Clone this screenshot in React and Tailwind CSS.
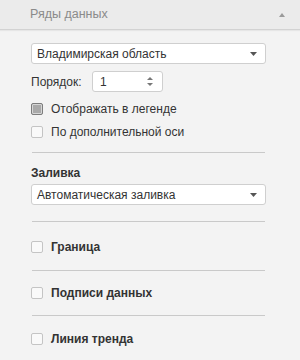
import React from "react";

function Caret() {
  return (
    <svg width="7" height="4" viewBox="0 0 7 4" className="block">
      <path d="M0 0 H7 L3.5 4 Z" fill="#555" />
    </svg>
  );
}

function Select({ text }) {
  return (
    <div className="h-[21px] bg-white border border-[#cfcfcf] rounded-[3px] flex items-center pl-[5px] pr-[8px] text-[#333]">
      <span className="flex-1 leading-none">{text}</span>
      <Caret />
    </div>
  );
}

function Box({ checked }) {
  if (checked) {
    return (
      <div className="w-[12px] h-[12px] rounded-[2px] border border-[#7d7d7d] bg-[#a9a9a9] shadow-[inset_0_0_0_1px_#d6d6d6] shrink-0" />
    );
  }
  return (
    <div className="w-[12px] h-[12px] rounded-[2px] border border-[#c4c4c4] bg-[#f9f9f9] shrink-0" />
  );
}

function Sep() {
  return <div className="h-px bg-[#c9c9c9] ml-[1px] mr-[1px]" />;
}

function CheckRow({ label, bold }) {
  return (
    <div className="h-[12px] flex items-center gap-[8px]">
      <Box />
      <span className={bold ? "font-bold leading-none" : "leading-none"}>{label}</span>
    </div>
  );
}

export default function App() {
  return (
    <div
      className="w-[300px] h-[360px] bg-[#f3f3f3] text-[12px] text-[#333] overflow-hidden"
      style={{ fontFamily: '"Liberation Sans", Arial, sans-serif' }}
    >
      <div className="h-[30px] bg-[#ebebeb] border-b border-[#d2d2d2] shadow-[0_1px_1px_rgba(0,0,0,0.05)] flex items-center pl-[30px] pr-[15px]">
        <span className="flex-1 text-[#8a8a8a] text-[12.5px]">Ряды данных</span>
        <svg width="6" height="4" viewBox="0 0 6 4" className="block">
          <path d="M0 4 H6 L3 0 Z" fill="#9a9a9a" />
        </svg>
      </div>

      <div className="pl-[31px] pr-[34px]">
        <div className="mt-[13px]">
          <Select text="Владимирская область" />
        </div>

        <div className="mt-[7px] flex items-center">
          <span className="w-[61px]">Порядок:</span>
          <div className="w-[71px] h-[21px] bg-white border border-[#cfcfcf] rounded-[3px] flex items-center pl-[7px] pr-[9px]">
            <span className="flex-1 leading-none">1</span>
            <svg width="6" height="11" viewBox="0 0 6 11" className="block">
              <path d="M0 4 H6 L3 1 Z" fill="#777" />
              <path d="M0 7 H6 L3 10 Z" fill="#777" />
            </svg>
          </div>
        </div>

        <div className="mt-[5px] h-[23px] flex items-center gap-[8px]">
          <Box checked />
          <span>Отображать в легенде</span>
        </div>
        <div className="h-[23px] flex items-center gap-[8px]">
          <Box />
          <span>По дополнительной оси</span>
        </div>

        <div className="mt-[9px]">
          <Sep />
        </div>

        <div className="mt-[12px] font-bold leading-[16px]">Заливка</div>
        <div className="mt-[3px]">
          <Select text="Автоматическая заливка" />
        </div>

        <div className="mt-[16px]">
          <Sep />
        </div>

        <div className="mt-[19px]">
          <CheckRow label="Граница" bold />
        </div>

        <div className="mt-[17px]">
          <Sep />
        </div>

        <div className="mt-[16px]">
          <CheckRow label="Подписи данных" bold />
        </div>

        <div className="mt-[16px]">
          <Sep />
        </div>

        <div className="mt-[17px]">
          <CheckRow label="Линия тренда" bold />
        </div>
      </div>
    </div>
  );
}
